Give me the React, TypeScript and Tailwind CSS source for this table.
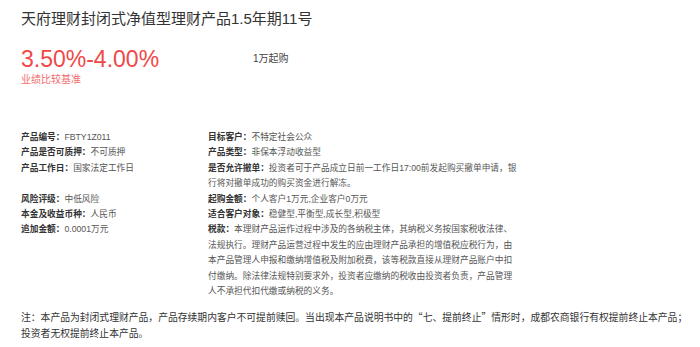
const leftRows: [string, string][] = [
  ['产品编号：', 'FBTY1Z011'],
  ['产品是否可质押：', '不可质押'],
  ['产品工作日：', '国家法定工作日'],
  ['', ''],
  ['风险评级：', '中低风险'],
  ['本金及收益币种：', '人民币'],
  ['追加金额：', '0.0001万元'],
];

const rightRows: [string, string][] = [
  ['目标客户：', '不特定社会公众'],
  ['产品类型：', '非保本浮动收益型'],
  ['是否允许撤单：', '投资者可于产品成立日前一工作日17:00前发起购买撤单申请，银行将对撤单成功的购买资金进行解冻。'],
  ['起购金额：', '个人客户1万元,企业客户0万元'],
  ['适合客户对象：', '稳健型,平衡型,成长型,积极型'],
  [
    '税款：',
    '本理财产品运作过程中涉及的各纳税主体，其纳税义务按国家税收法律、法规执行。理财产品运营过程中发生的应由理财产品承担的增值税应税行为，由本产品管理人申报和缴纳增值税及附加税费，该等税款直接从理财产品账户中扣付缴纳。除法律法规特别要求外，投资者应缴纳的税收由投资者负责，产品管理人不承担代扣代缴或纳税的义务。',
  ],
];

function Row({ label, value }: { label: string; value: string }) {
  return (
    <p className="min-h-[15.4px]">
      <span className="font-bold text-[#333]">{label}</span>
      <span className="text-[#555]">{value}</span>
    </p>
  );
}

export default function App() {
  return (
    <div className="w-[700px] h-[347px] bg-white px-[21px] pt-[9px] font-['Liberation_Sans','Noto_Sans_CJK_SC',sans-serif] overflow-hidden">
      <h1 className="text-[15px] leading-[20px] text-[#333]">天府理财封闭式净值型理财产品1.5年期11号</h1>

      <div className="flex items-start mt-[17px]">
        <div className="w-[232px]">
          <div className="text-[23px] leading-[26px] text-[#f04848]">3.50%-4.00%</div>
          <div className="text-[10px] leading-[14px] text-[#f26b6b] mt-[1px]">业绩比较基准</div>
        </div>
        <div className="text-[10px] leading-[26px] text-[#444]">1万起购</div>
      </div>

      <div className="flex mt-[43px] text-[8.7px] leading-[15.4px]">
        <div className="w-[187px] flex flex-col">
          {leftRows.map(([l, v], i) => (
            <Row key={i} label={l} value={v} />
          ))}
        </div>
        <div className="w-[312px] flex flex-col">
          {rightRows.map(([l, v], i) => (
            <Row key={i} label={l} value={v} />
          ))}
        </div>
      </div>

      <div className="mt-[11px] text-[9.8px] leading-[15.5px] text-[#333] font-['Noto_Sans_CJK_SC',sans-serif]">
        <p className="whitespace-nowrap">
          注：本产品为封闭式理财产品，产品存续期内客户不可提前赎回。当出现本产品说明书中的“七、提前终止”情形时，成都农商银行有权提前终止本产品；
        </p>
        <p>投资者无权提前终止本产品。</p>
      </div>
    </div>
  );
}
